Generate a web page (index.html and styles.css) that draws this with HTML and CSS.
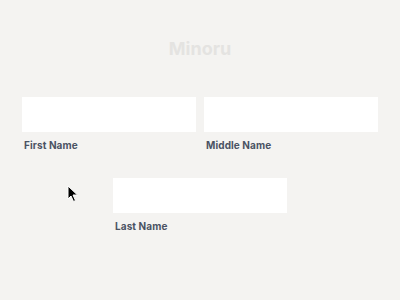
FILE: index.html
```html
<!DOCTYPE html>
<html>
    <head>
        <link rel="stylesheet" href="styles.css">
    </head>
    <body>
        <div class="page">
            <h1 class="title">Minoru</h1>
            <div class="row">
                <div class="field">
                    <input class="box" type="text">
                    <label>First Name</label>
                </div>
                <div class="field">
                    <input class="box" type="text">
                    <label>Middle Name</label>
                </div>
            </div>
            <div class="row center">
                <div class="field">
                    <input class="box" type="text">
                    <label>Last Name</label>
                </div>
            </div>
        </div>
        <svg class="cursor" width="12" height="18" viewBox="0 0 12 18">
            <path d="M1 1 L1 14 L4 11 L6.5 16.5 L8.5 15.5 L6 10 L10.5 10 Z" fill="#000" stroke="#fff" stroke-width="1"/>
        </svg>
    </body>
</html>
```

FILE: styles.css
```css
html, body {
    margin: 0;
    height: 100%;
    background-color: #f4f3f1;
    overflow: hidden;
}
.page {
    font-family: 'Inter', 'Noto Sans', sans-serif;
    padding: 38px 22px 0 22px;
}
.title {
    margin: 0;
    text-align: center;
    font-size: 18px;
    font-weight: 700;
    color: #e4e3e1;
    line-height: 22px;
}
.row {
    display: flex;
    gap: 8px;
    margin-top: 37px;
}
.row.center {
    justify-content: center;
    margin-top: 26px;
}
.field {
    display: flex;
    flex-direction: column;
    width: 174px;
}
.box {
    box-sizing: border-box;
    width: 174px;
    height: 35px;
    border: none;
    background-color: #ffffff;
    margin: 0;
    padding: 0;
    outline: none;
}
.field label {
    margin-top: 6px;
    padding-left: 2px;
    font-size: 10px;
    font-weight: 700;
    letter-spacing: 0.1px;
    color: #4a5263;
    line-height: 14px;
}
.cursor {
    position: absolute;
    left: 67px;
    top: 185px;
}
```
